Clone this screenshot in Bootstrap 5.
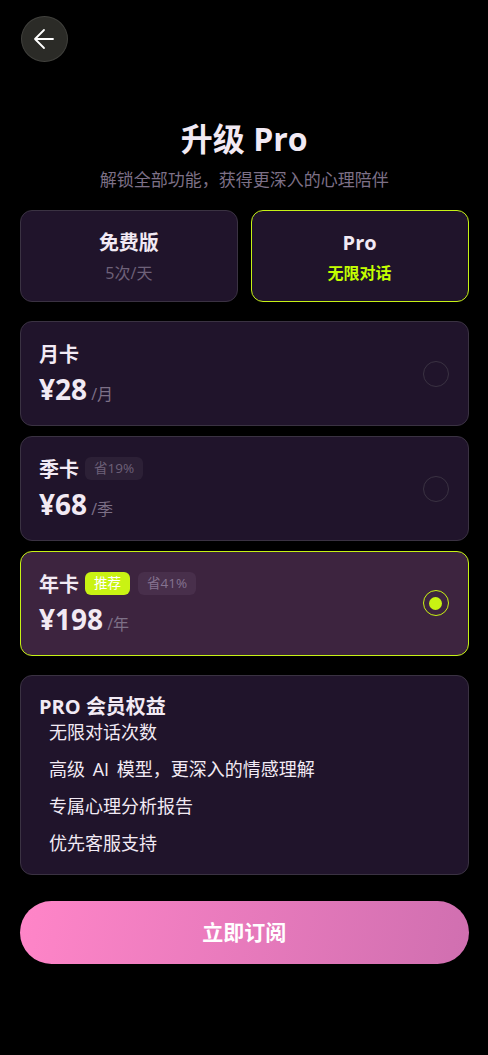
<!DOCTYPE html>
<html lang="zh-CN">
  <head>
    <meta charset="UTF-8" />
    <meta name="viewport" content="width=device-width, initial-scale=1.0" />
    <link
      href="https://cdn.jsdelivr.net/npm/bootstrap@5.3.0/dist/css/bootstrap.min.css"
      rel="stylesheet"
    />
    <title>升级 Pro</title>
    <style>
      body {
        background-color: #000;
        color: #f2eaf4;
        font-family: "Open Sans", "Noto Sans CJK SC", sans-serif;
      }

      .pagina {
        height: 1055px;
        padding: 16px 19.5px 0 20px;
      }

      .btn-voltar {
        width: 47px;
        height: 46px;
        margin-left: 1px;
        padding: 0;
        background-color: #2b2b27;
        border: 1px solid #41413d;
      }

      .btn-voltar svg {
        margin: 0 1px 1px 0;
      }

      .titulo {
        margin: 54px 0 0;
        font-size: 32px;
        line-height: 46px;
        font-weight: 700;
      }

      .subtitulo {
        margin: 6px 0 18px;
        font-size: 17px;
        line-height: 24px;
        color: #7d7087;
      }

      .bloco {
        background-color: #20142b;
        border: 1px solid #3a3242;
        border-radius: 12px;
      }

      .plano-linha {
        gap: 13px;
      }

      .plano-topo {
        flex: 1 1 0;
        height: 92px;
        padding-top: 1px;
      }

      .plano-nome {
        margin-bottom: 3px;
        font-size: 20px;
        line-height: 30px;
        font-weight: 700;
      }

      .plano-info {
        font-size: 16px;
        line-height: 24px;
        color: #6e6179;
      }

      .borda-lima {
        border-color: #c6f215;
      }

      .texto-lima {
        color: #c4ff00;
        font-weight: 700;
      }

      .lista-precos {
        gap: 10px;
        margin-top: 19px;
      }

      .cartao-preco {
        height: 105px;
        padding: 0 19px 0 18px;
      }

      .cartao-ativo {
        background-color: #3d243f;
      }

      .preco-nome {
        font-size: 20px;
        line-height: 30px;
        font-weight: 700;
      }

      .preco-valor {
        font-size: 28px;
        line-height: 38px;
        font-weight: 700;
      }

      .preco-periodo {
        font-size: 16px;
        color: #7d7087;
      }

      .linha-nome {
        gap: 6px;
      }

      .etiqueta {
        margin-bottom: 2px;
        padding: 0 9px;
        font-size: 13.5px;
        line-height: 23px;
        border-radius: 6px;
        color: #6e6179;
        background-color: #2c2036;
      }

      .etiqueta-ativa {
        margin-left: 2px;
        color: #857390;
        background-color: #482f4b;
      }

      .etiqueta-lima {
        color: #fff;
        background-color: #c9f313;
      }

      .radio {
        width: 26px;
        height: 26px;
        border: 1px solid #3a3242;
      }

      .radio-ativo {
        margin-bottom: 1px;
        border-color: #c9f313;
      }

      .radio-ativo span {
        width: 13px;
        height: 13px;
        background-color: #c9f313;
      }

      .beneficios {
        height: 200px;
        margin-top: 19px;
        padding: 17px 18px 0;
      }

      .beneficios h2 {
        margin: 0;
        font-size: 20px;
        line-height: 27px;
        font-weight: 700;
      }

      .beneficios li {
        padding-left: 10px;
        margin-bottom: 13px;
        font-size: 18px;
        line-height: 24px;
        word-spacing: 3px;
      }

      .btn-assinar {
        height: 63px;
        margin-top: 26px;
        font-size: 21px;
        font-weight: 700;
        color: #fff;
        border: 0;
        background: linear-gradient(100deg, #ff85c8, #d06fb0);
      }
    </style>
  </head>

  <body>
    <main class="pagina">
      <button class="btn btn-voltar rounded-circle d-flex align-items-center justify-content-center" aria-label="Voltar">
        <svg width="24" height="24" viewBox="0 0 24 24" fill="none" stroke="#fff" stroke-width="1.8" stroke-linecap="round" stroke-linejoin="round">
          <path d="M21 12H3M12 3l-9 9 9 9" />
        </svg>
      </button>

      <h1 class="titulo text-center">升级 Pro</h1>
      <p class="subtitulo text-center">解锁全部功能，获得更深入的心理陪伴</p>

      <div class="d-flex plano-linha">
        <div class="bloco plano-topo d-flex flex-column align-items-center justify-content-center">
          <div class="plano-nome">免费版</div>
          <div class="plano-info">5次/天</div>
        </div>
        <div class="bloco borda-lima plano-topo d-flex flex-column align-items-center justify-content-center">
          <div class="plano-nome">Pro</div>
          <div class="plano-info texto-lima">无限对话</div>
        </div>
      </div>

      <div class="d-flex flex-column lista-precos">
        <div class="bloco cartao-preco d-flex align-items-center justify-content-between">
          <div>
            <div class="preco-nome">月卡</div>
            <div><span class="preco-valor">¥28</span> <span class="preco-periodo">/月</span></div>
          </div>
          <div class="radio rounded-circle"></div>
        </div>

        <div class="bloco cartao-preco d-flex align-items-center justify-content-between">
          <div>
            <div class="d-flex align-items-center linha-nome">
              <span class="preco-nome">季卡</span>
              <span class="etiqueta">省19%</span>
            </div>
            <div><span class="preco-valor">¥68</span> <span class="preco-periodo">/季</span></div>
          </div>
          <div class="radio rounded-circle"></div>
        </div>

        <div class="bloco borda-lima cartao-ativo cartao-preco d-flex align-items-center justify-content-between">
          <div>
            <div class="d-flex align-items-center linha-nome">
              <span class="preco-nome">年卡</span>
              <span class="etiqueta etiqueta-lima">推荐</span>
              <span class="etiqueta etiqueta-ativa">省41%</span>
            </div>
            <div><span class="preco-valor">¥198</span> <span class="preco-periodo">/年</span></div>
          </div>
          <div class="radio radio-ativo rounded-circle d-flex align-items-center justify-content-center">
            <span class="rounded-circle d-block"></span>
          </div>
        </div>
      </div>

      <section class="bloco beneficios">
        <h2>PRO 会员权益</h2>
        <ul class="list-unstyled mb-0">
          <li>无限对话次数</li>
          <li>高级 AI 模型，更深入的情感理解</li>
          <li>专属心理分析报告</li>
          <li>优先客服支持</li>
        </ul>
      </section>

      <button class="btn btn-assinar w-100 rounded-pill">立即订阅</button>
    </main>

    <script src="https://cdn.jsdelivr.net/npm/bootstrap@5.3.0/dist/js/bootstrap.bundle.min.js"></script>
  </body>
</html>
